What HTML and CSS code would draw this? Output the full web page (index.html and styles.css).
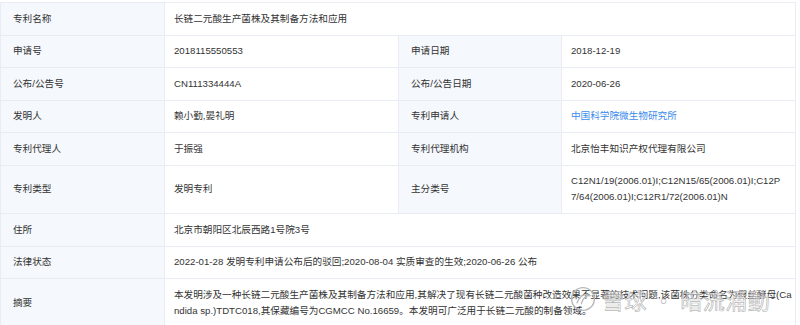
FILE: index.html
```html
<!DOCTYPE html>
<html lang="zh-CN">
<head>
<meta charset="utf-8">
<title>专利信息</title>
<link rel="stylesheet" href="styles.css">
</head>
<body>
<table class="info">
  <colgroup>
    <col class="c-label1">
    <col class="c-val1">
    <col class="c-label2">
    <col class="c-val2">
  </colgroup>
  <tbody>
    <tr>
      <th>专利名称</th>
      <td colspan="3">长链二元酸生产菌株及其制备方法和应用</td>
    </tr>
    <tr>
      <th>申请号</th>
      <td>2018115550553</td>
      <th>申请日期</th>
      <td>2018-12-19</td>
    </tr>
    <tr>
      <th>公布/公告号</th>
      <td>CN111334444A</td>
      <th>公布/公告日期</th>
      <td>2020-06-26</td>
    </tr>
    <tr>
      <th>发明人</th>
      <td>赖小勤,晏礼明</td>
      <th>专利申请人</th>
      <td><a class="link" href="#">中国科学院微生物研究所</a></td>
    </tr>
    <tr>
      <th>专利代理人</th>
      <td>于振强</td>
      <th>专利代理机构</th>
      <td>北京怡丰知识产权代理有限公司</td>
    </tr>
    <tr>
      <th>专利类型</th>
      <td>发明专利</td>
      <th>主分类号</th>
      <td>C12N1/19(2006.01)I;C12N15/65(2006.01)I;C12P7/64(2006.01)I;C12R1/72(2006.01)N</td>
    </tr>
    <tr>
      <th>住所</th>
      <td colspan="3">北京市朝阳区北辰西路1号院3号</td>
    </tr>
    <tr>
      <th>法律状态</th>
      <td colspan="3">2022-01-28 发明专利申请公布后的驳回;2020-08-04 实质审查的生效;2020-06-26 公布</td>
    </tr>
    <tr>
      <th>摘要</th>
      <td colspan="3" class="abstract">本发明涉及一种长链二元酸生产菌株及其制备方法和应用,其解决了现有长链二元酸菌种改造效果不显著的技术问题,该菌株分类命名为假丝酵母(Candida sp.)TDTC018,其保藏编号为CGMCC No.16659。本发明可广泛用于长链二元酸的制备领域。<div class="watermark"><svg class="wm-logo" viewBox="0 0 32 32" width="28" height="28"><circle cx="16" cy="16" r="13" fill="none" stroke="#b8b8b8" stroke-width="1.6"/><path d="M9 21 C12 12, 19 9, 23 12 C19 12, 15 16, 14 22" fill="none" stroke="#b8b8b8" stroke-width="1.6"/></svg><span class="wm-text">雪球 · 暗流涌動</span></div></td>
    </tr>
  </tbody>
</table>
</body>
</html>
```

FILE: styles.css
```css
html, body {
  margin: 0;
  padding: 0;
  background: #ffffff;
}

body {
  font-family: "Liberation Sans", "Noto Sans CJK SC", Arial, sans-serif;
  font-size: 9.65px;
  color: #333333;
}

.info {
  margin-top: 2px;
  width: 795px;
  table-layout: fixed;
  border-collapse: collapse;
  border: 1px solid #e9edf3;
}

.c-label1 { width: 164px; }
.c-val1 { width: 234px; }
.c-label2 { width: 163px; }
.c-val2 { width: 234px; }

.info th,
.info td {
  border: 1px solid #e9edf3;
  line-height: 16px;
  padding: 7.75px 10px 7.75px 9px;
  vertical-align: middle;
  text-align: left;
  font-weight: normal;
  word-break: break-all;
}

.info th {
  background: #f5f8fc;
  padding-left: 12px;
  color: #333333;
}

.info td {
  background: #ffffff;
}

.link {
  color: #3b8ceb;
  text-decoration: none;
}

.info td.abstract {
  position: relative;
  padding-right: 3px;
}

.watermark {
  position: absolute;
  left: 404px;
  top: 5px;
  display: flex;
  align-items: center;
  gap: 5px;
  white-space: nowrap;
  pointer-events: none;
}

.wm-logo {
  display: block;
}

.wm-text {
  font-family: "Noto Sans CJK SC", sans-serif;
  font-size: 22px;
  line-height: 30px;
  color: rgba(255, 255, 255, 0.55);
  -webkit-text-stroke: 0.7px rgba(170, 170, 170, 0.85);
  letter-spacing: 0.5px;
}
```
